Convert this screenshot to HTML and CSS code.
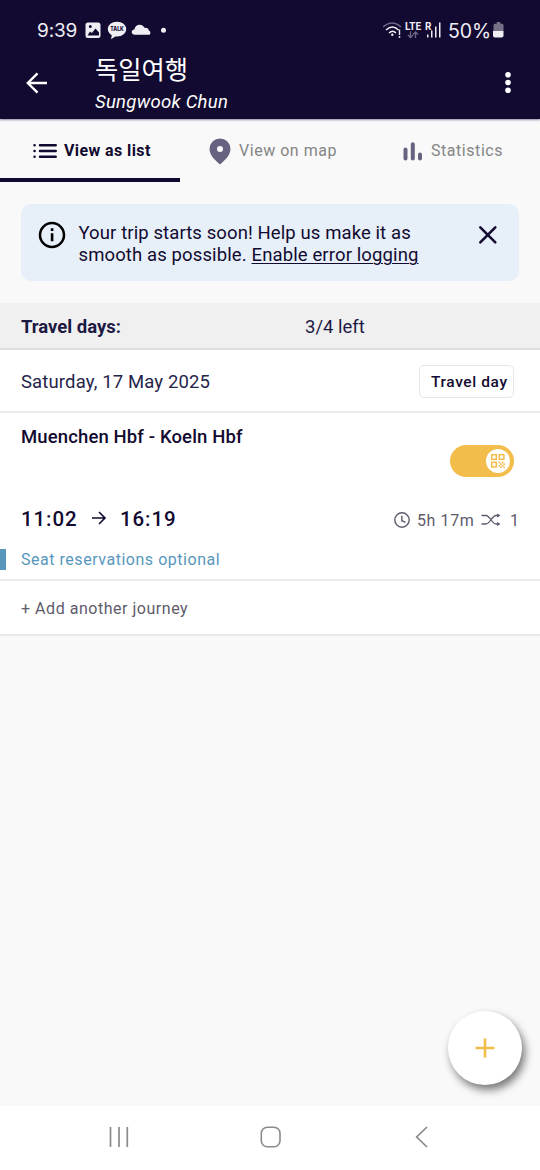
FILE: index.html
```html
<!DOCTYPE html>
<html lang="en">
<head>
<meta charset="utf-8">
<title>독일여행</title>
<link rel="stylesheet" href="styles.css">
</head>
<body>
<div class="screen">
  <header class="header">
    <div class="status">
      <span class="clock">9:39</span>
      <svg class="notifications" width="86" height="22" viewBox="0 0 86 22">
        <path fill="#f0eef5" fill-rule="evenodd" d="M3 2.500h10q2.500 0 2.500 2.500v10.500q0 2.500-2.500 2.500h-10q-2.500 0-2.500-2.500v-10.500q0-2.500 2.500-2.500zM2.500 15.500h11.500v-3l-3.500-4-3.700 4.500-1.800-1.500zM3.800 6.500a1.500 1.500 0 1 0 3 0a1.500 1.500 0 1 0-3 0z"/>
        <path fill="#f0eef5" d="M32 1.700c5.200 0 9.200 3.200 9.200 7.300s-4 7.500-9.200 7.500l-1.700-.1-4.300 2.800.8-4c-2.400-1.300-4-3.500-4-6.200 0-4.100 4-7.300 9.200-7.300z"/>
        <text class="talk" x="25.300" y="11.300" textLength="13.500" lengthAdjust="spacingAndGlyphs">TALK</text>
        <path fill="#f0eef5" d="M50 14.800c-4.200 0-4.300-5-.6-5.200.6-5.700 8-6.400 10-1.800 3-.3 4.200 1 4.400 2.600 1.800.3 2.600 4.400-.3 4.400z"/>
        <circle cx="78.500" cy="10.300" r="2.500" fill="#f0eef5"/>
      </svg>
      <svg class="signals" width="64" height="22" viewBox="0 0 64 22">
        <g fill="none" stroke="#f0eef5" stroke-width="1.400">
          <path stroke="#6d6784" d="M0 7q9-8 18 0"/>
          <path d="M3 10q6.500-6 12.500 0M6 13q3.500-3.500 7 0"/>
          <path d="M16.500 9.500v5.500"/>
        </g>
        <circle cx="9.300" cy="14.700" r="1.200" fill="#f0eef5"/><circle cx="16.500" cy="17" r=".9" fill="#f0eef5"/>
        <text class="lte" x="22" y="9.500" textLength="16" lengthAdjust="spacingAndGlyphs">LTE</text>
        <path fill="none" stroke="#6d6784" stroke-width="1.300" d="M27.500 11.500v6M25 15l2.500 2.500 2.500-2.500M32.500 18v-6M30 14.500l2.500-2.500 2.500 2.500"/>
        <text class="lte" x="42" y="9.500">R</text>
        <path fill="#f0eef5" d="M44 14.500h1.500v3h-1.500zM48 10.500h1.500v7h-1.500zM52 6.500h1.500v11h-1.500zM56 2.500h1.500v15h-1.500z"/>
      </svg>
      <span class="percent">50%</span>
      <svg class="battery" width="12" height="17" viewBox="0 0 12 17">
        <path fill="#777188" d="M3.500 1q0-1 1-1h2q1 0 1 1v.8h1.500q1.500 0 1.500 1.500v5.700h-10v-5.700q0-1.500 1.500-1.500h2z"/>
        <path fill="#f0eef5" d="M0 9h10.500v4.500q0 2-2 2h-6.500q-2 0-2-2z"/>
      </svg>
    </div>
    <div class="titlebar">
      <svg class="back" width="22" height="22" viewBox="0 0 22 22"><path fill="none" stroke="#fff" stroke-width="2.400" d="M21 11h-19M11.500 1.300l-9.700 9.700 9.700 9.700"/></svg>
      <div class="titles"><div class="title">독일여행</div><div class="owner">Sungwook Chun</div></div>
      <svg class="more" width="8" height="24" viewBox="0 0 8 24" fill="#fff"><circle cx="4" cy="3.700" r="2.800"/><circle cx="4" cy="11.500" r="2.800"/><circle cx="4" cy="19.300" r="2.800"/></svg>
    </div>
  </header>

  <nav class="tabs">
    <div class="tab tab-active">
      <svg width="24" height="16" viewBox="0 0 24 16"><g stroke="#120a30" stroke-width="2.500" stroke-linecap="round"><path d="M7 2.200h15.700M7 8h15.700M7 13.700h15.700"/><path d="M1.500 2.200h.1M1.500 8h.1M1.500 13.700h.1"/></g></svg>
      <span class="tab-list">View as list</span>
    </div>
    <div class="tab tab-map-item">
      <svg width="22" height="27" viewBox="0 0 22 27"><path fill="#67627f" fill-rule="evenodd" d="M11 .5a10.500 10.500 0 0 1 10.500 10.500c0 6.500-6 11.500-10.500 15.500-4.500-4-10.500-9-10.500-15.500a10.500 10.500 0 0 1 10.500-10.500zM11 8a3 3 0 1 0 0 6a3 3 0 1 0 0-6z"/></svg>
      <span class="tab-map">View on map</span>
    </div>
    <div class="tab tab-stats-item">
      <svg width="20" height="19" viewBox="0 0 20 19"><path fill="none" stroke="#67627f" stroke-width="4" stroke-linecap="round" d="M2.500 7.500v9M9.800 2.300v14.200M17 12.500v4"/></svg>
      <span class="tab-stats">Statistics</span>
    </div>
  </nav>

  <section class="notice">
    <svg class="info" width="28" height="28" viewBox="0 0 28 28"><circle cx="14" cy="14" r="12" fill="none" stroke="#000" stroke-width="2.500"/><path fill="#000" d="M12.800 7.300h2.600v2.600h-2.600zM12.800 12.300h2.600v8h-2.600z"/></svg>
    <p class="notice-text"><span class="line-one">Your trip starts soon! Help us make it as</span><br><span class="line-two">smooth as possible. <u>Enable error logging</u></span></p>
    <svg class="close" width="20" height="20" viewBox="0 0 20 20"><path fill="none" stroke="#120a30" stroke-width="2.600" stroke-linecap="round" d="M2.300 2.300l15 15M17.300 2.300l-15 15"/></svg>
  </section>

  <main class="trip">
    <div class="days"><strong>Travel days:</strong><span class="left">3/4 left</span></div>
    <div class="date-row"><span class="date">Saturday, 17 May 2025</span><span class="badge">Travel day</span></div>
    <article class="journey">
      <div class="route-row">
        <h2 class="route">Muenchen Hbf - Koeln Hbf</h2>
        <div class="toggle"><div class="knob">
          <svg width="16" height="16" viewBox="0 0 16 16"><g fill="none" stroke="#f3bd4b" stroke-width="1.500"><rect x="1.700" y="1.700" width="4.600" height="4.600"/><rect x="9.300" y="1.700" width="4.600" height="4.600"/><rect x="1.700" y="9.300" width="4.600" height="4.600"/></g><path fill="#f3bd4b" d="M8.500 8.500h1.700v1.700h-1.700zM11.900 8.500h1.500v1.700h-1.500zM10.200 10.200h1.700v1.700h-1.700zM13.400 10.200h1.500v1.700h-1.500zM8.500 11.900h1.700v1.500h-1.700zM11.900 11.900h1.500v1.500h-1.500zM10.200 13.400h1.700v1.500h-1.700zM13.400 13.400h1.500v1.500h-1.500z"/></svg>
        </div></div>
      </div>
      <div class="times">
        <span class="time">11:02</span>
        <svg class="arrow" width="16" height="16" viewBox="0 0 16 16"><path fill="none" stroke="#120a30" stroke-width="1.600" d="M1 8h12.800M8 2l6 6-6 6"/></svg>
        <span class="time">16:19</span>
        <svg class="duration-icon" width="18" height="18" viewBox="0 0 18 18"><g fill="none" stroke="#5e5b6b" stroke-width="1.400"><circle cx="9" cy="9" r="7.200"/><path d="M8.800 4.700v5l3.700 1.600"/></g></svg>
        <span class="duration">5h 17m</span>
        <svg class="changes-icon" width="20" height="14" viewBox="0 0 20 14"><path fill="none" stroke="#5e5b6b" stroke-width="1.300" d="M.5 2.500h4.500c4 0 6 8.500 10 8.500h3M.5 11h4.500c4 0 6-8.500 10-8.500h3"/><path fill="#5e5b6b" d="M16 .5l3.500 2-3.500 2zM16 9l3.500 2-3.500 2z"/></svg>
        <span class="changes">1</span>
      </div>
      <div class="seat">Seat reservations optional</div>
    </article>
    <div class="add-row"><span class="add">+ Add another journey</span></div>
  </main>

  <div class="canvas"><div class="fab"><svg width="20" height="20" viewBox="0 0 20 20"><path stroke="#efbd49" stroke-width="2.600" d="M10 .5v19M.5 10h19"/></svg></div></div>

  <footer class="system-nav">
    <svg width="22" height="22" viewBox="0 0 22 22"><path stroke="#8a8a8a" stroke-width="1.700" d="M2.500 1v20M11 1v20M19.300 1v20"/></svg>
    <svg width="22" height="22" viewBox="0 0 22 22"><rect x="1.300" y="1.300" width="18.700" height="19.400" rx="6" fill="none" stroke="#8a8a8a" stroke-width="1.600"/></svg>
    <svg width="22" height="22" viewBox="0 0 22 22"><path fill="none" stroke="#8a8a8a" stroke-width="1.700" d="M16 1l-10.300 10 10.300 10"/></svg>
  </footer>
</div>
</body>
</html>
```

FILE: styles.css
```css
* { box-sizing: border-box; }
body { margin: 0; font-family: Roboto, "Noto Sans CJK KR", sans-serif; color: #120a30; }
svg { display: block; flex: none; }
.screen { width: 540px; height: 1170px; display: flex; flex-direction: column; background: #f9f9f9; overflow: hidden; white-space: nowrap; }
.header { height: 119px; flex: none; background: #120a30; color: #fff; box-shadow: 0 1px 2px #8c88aa; z-index: 1; }
.status { height: 52px; padding: 20px 0 0 37px; display: flex; align-items: flex-start; color: #f0eef5; font-family: Inter, sans-serif; line-height: 22px; }
.clock { width: 48px; font-size: 19px; letter-spacing: -.15px; }
.signals { margin-left: 212px; }
.percent { margin-left: 1px; width: 45px; font-size: 19.500px; letter-spacing: -.1px; }
.battery { margin-top: 2px; }
.talk { font: 800 6px Inter, sans-serif; fill: #120a30; }
.lte { font: 700 10px Roboto, sans-serif; fill: #f0eef5; }
.titlebar { display: flex; padding-left: 26px; }
.back { margin-top: 20px; }
.titles { margin-left: 47px; width: 400px; padding-top: 1px; }
.title { height: 36px; line-height: 36px; font-size: 25.300px; }
.owner { height: 26px; line-height: 26px; font-size: 18.500px; font-style: italic; letter-spacing: .28px; }
.more { margin: 19px 0 0 9px; }
.tabs { height: 63px; flex: none; display: grid; grid-template-columns: 180px 180px 180px; color: #858585; font-size: 16px; line-height: 20px; }
.tab { display: flex; align-items: center; height: 63px; padding-top: 1px; }
.tab-active { padding-left: 33px; gap: 7px; color: #120a30; font-weight: 700; border-bottom: 4px solid #120a30; border-radius: 2px 2px 0 0; padding-top: 5px; }
.tab-map-item { padding-left: 29px; gap: 8px; }
.tab-stats-item { padding-left: 43px; gap: 8px; }
.tab-list { letter-spacing: .4px; }
.tab-map { letter-spacing: .53px; }
.tab-stats { letter-spacing: .55px; }
.notice { flex: none; height: 77px; margin: 22px 21px 0; border-radius: 10px; background: #e7f0f8; display: flex; align-items: flex-start; padding: 17px 21px 0 17px; }
.notice-text { margin: 1px 0 0 12.500px; flex: 1; font-size: 18.500px; line-height: 22px; }
.notice-text u { text-decoration-thickness: 1px; text-underline-offset: 2px; }
.line-one { letter-spacing: .1px; }
.line-two { letter-spacing: .12px; }
.close { margin-top: 4px; }
.trip { flex: none; margin-top: 22px; background: #fff; }
.days { height: 47px; background: #f0f0f0; border-bottom: 2px solid #dfdfe1; padding-left: 21px; display: flex; align-items: center; padding-top: 2px; font-size: 18.500px; color: #1d1a43; }
.days strong { width: 284px; font-weight: 700; }
.date-row { height: 63px; border-bottom: 2px solid #ececec; padding: 2px 26px 0 21px; display: flex; align-items: center; justify-content: space-between; }
.date { font-size: 18.500px; letter-spacing: .14px; color: #26244a; }
.badge { width: 95px; height: 33px; border: 1px solid #e6e6ea; border-radius: 5px; padding-left: 11px; line-height: 32px; font-size: 15.500px; font-weight: 500; letter-spacing: .6px; }
.journey { height: 168px; border-bottom: 2px solid #ececec; }
.route-row { display: flex; justify-content: space-between; height: 90px; padding: 13px 26px 0 21px; }
.route { margin: 0; font-size: 18.500px; font-weight: 500; line-height: 22px; letter-spacing: .13px; }
.toggle { width: 64px; height: 32px; margin-top: 19px; border-radius: 16px; background: #f3bd4b; padding: 4px; display: flex; justify-content: flex-end; }
.knob { width: 24px; height: 24px; border-radius: 50%; background: #fff; display: grid; place-items: center; }
.times { height: 31px; display: flex; align-items: center; padding-left: 21px; }
.time { width: 70px; font-size: 20.500px; font-weight: 500; letter-spacing: .9px; }
.arrow { margin: -1px 13px 0 0; }
.duration-icon { margin: 2px 6px 0 203px; }
.duration { width: 63px; font-size: 16px; letter-spacing: .6px; color: #5e5b6b; padding-top: 3px; }
.changes-icon { margin: 3px 0 0 1px; }
.changes { margin-left: 9px; padding-top: 3px; font-size: 16px; color: #5e5b6b; }
.seat { margin-top: 15px; height: 21px; border-left: 6px solid #5897bd; padding-left: 15px; font-size: 16px; line-height: 22px; letter-spacing: .53px; color: #5897bd; }
.add-row { height: 55px; border-bottom: 2px solid #e9e9e9; padding-left: 21px; line-height: 55px; font-size: 16px; color: #5e5b6b; }
.add { letter-spacing: .53px; }
.canvas { flex: 1; display: flex; justify-content: flex-end; align-items: flex-end; padding: 0 18px 21px; }
.fab { width: 74px; height: 74px; border-radius: 50%; background: #fff; display: grid; place-items: center; box-shadow: 3px 5px 8px #777; }
.system-nav { height: 64px; flex: none; background: #fff; display: flex; align-items: center; justify-content: space-between; padding: 0 107px 2px 108px; }
```
